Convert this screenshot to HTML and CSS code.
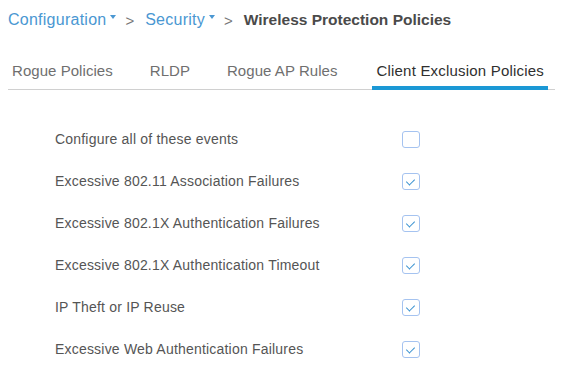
FILE: index.html
```html
<!DOCTYPE html>
<html>
<head>
<meta charset="utf-8">
<link rel="stylesheet" href="styles.css">
</head>
<body>
<div class="page">
  <div class="crumbs">
    <a class="crumb">Configuration<span class="caret"></span></a>
    <span class="sep">&gt;</span>
    <a class="crumb">Security<span class="caret"></span></a>
    <span class="sep">&gt;</span>
    <span class="title">Wireless Protection Policies</span>
  </div>
  <div class="tabs">
    <div class="tab">Rogue Policies</div>
    <div class="tab">RLDP</div>
    <div class="tab">Rogue AP Rules</div>
    <div class="tab active">Client Exclusion Policies</div>
  </div>
  <div class="rows">
    <div class="row"><span class="label">Configure all of these events</span><span class="box"></span></div>
    <div class="row"><span class="label">Excessive 802.11 Association Failures</span><span class="box checked"></span></div>
    <div class="row"><span class="label">Excessive 802.1X Authentication Failures</span><span class="box checked"></span></div>
    <div class="row"><span class="label">Excessive 802.1X Authentication Timeout</span><span class="box checked"></span></div>
    <div class="row"><span class="label">IP Theft or IP Reuse</span><span class="box checked"></span></div>
    <div class="row"><span class="label">Excessive Web Authentication Failures</span><span class="box checked"></span></div>
  </div>
</div>
</body>
</html>
```
FILE: styles.css
```css
* { box-sizing: border-box; }
html, body { margin: 0; padding: 0; background: #fff; }
body { font-family: "Liberation Sans", Arial, sans-serif; width: 562px; height: 377px; overflow: hidden; }
.page { padding: 0 7px 0 8px; }
.crumbs { display: flex; align-items: center; height: 40px; font-size: 16px; white-space: nowrap; }
.crumb { color: #4a97d2; display: flex; align-items: center; letter-spacing: 0.25px; }
.caret { display: inline-block; width: 0; height: 0; border-left: 3px solid transparent; border-right: 3px solid transparent; border-top: 4px solid #4a97d2; margin-left: 4px; margin-top: -6px; }
.sep { color: #777; margin: 0 11px 0 9px; font-size: 15px; }
.title { font-weight: bold; color: #4a4a4a; font-size: 15.5px; }
.tabs { display: flex; gap: 29px; margin-top: 12px; border-bottom: 1px solid #d0d0d0; height: 38px; white-space: nowrap; }
.tab { flex: none; font-size: 15px; color: #6f6f6f; padding: 10px 4px 0 4px; letter-spacing: 0.05px; }
.tab.active { color: #2f2f2f; border-bottom: 4px solid #1b98d5; margin-bottom: -1px; margin-left: 2px; letter-spacing: 0.2px; }
.rows { padding: 28px 0 0 47px; }
.row { display: flex; align-items: center; justify-content: space-between; width: 365px; height: 42px; }
.label { font-size: 14px; color: #555; letter-spacing: 0.2px; }
.box { width: 18px; height: 17px; border: 1.5px solid #a5c3f0; border-radius: 3px; position: relative; }
.box.checked::after { content: ""; position: absolute; left: 5px; top: 3px; width: 4px; height: 7px; border-right: 1.5px solid #3a92d0; border-bottom: 1.5px solid #3a92d0; transform: rotate(45deg); }
```
